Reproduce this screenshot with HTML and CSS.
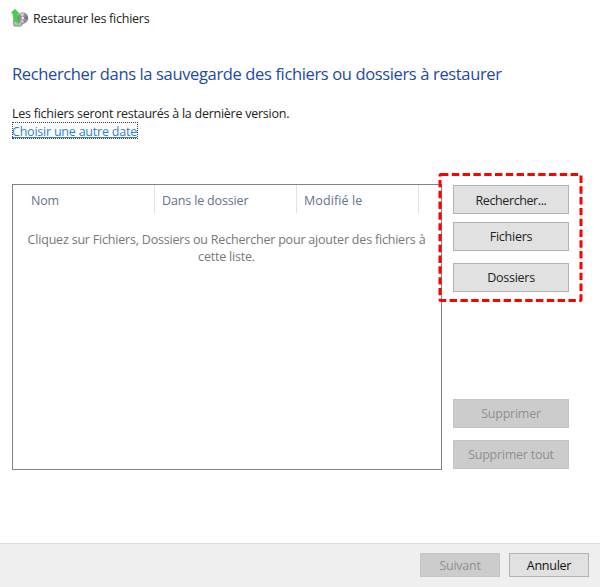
FILE: index.html
```html
<!DOCTYPE html>
<html lang="fr">
<head>
<meta charset="utf-8">
<title>Restaurer les fichiers</title>
<link rel="stylesheet" href="styles.css">
</head>
<body>
<div class="window">
  <header class="titlebar">
    <svg class="app-icon" width="18" height="18" viewBox="0 0 18 18">
      <path d="M2 12l3-3h6l3 4-5 4H3z" fill="#d5d8d5" stroke="#888" stroke-width=".6"/>
      <path d="M2 13l1.500 4h7l1-2" fill="#b9bbb9" stroke="#838583" stroke-width=".7"/>
      <ellipse cx="11.800" cy="9" rx="5" ry="5.300" fill="#958f9c" stroke="#77747c" stroke-width=".7"/>
      <path d="M11.800 9L9 4.700l4-.7z" fill="#dcd2e4"/>
      <path d="M11.800 9l4.500-2 .2 3.800z" fill="#806b7a"/>
      <path d="M11.800 9l-3 4 4 .9z" fill="#d5c9bf"/>
      <circle cx="11.800" cy="9" r="1.600" fill="#f5f5f5" stroke="#858087" stroke-width=".5"/>
      <path d="M3.800.3L.4 4l1.700.4.800 7.600 5.200 2.300-1.800-9.600 1.900-.3z" fill="#3fd548" stroke="#48a650" stroke-width=".6"/>
    </svg>
    <span class="caption">Restaurer les fichiers</span>
  </header>
  <main class="content">
    <h1 class="heading">Rechercher dans la sauvegarde des fichiers ou dossiers à restaurer</h1>
    <p class="note">Les fichiers seront restaurés à la dernière version.</p>
    <a class="link" href="#"><span class="link-text">Choisir une autre date</span></a>
    <div class="panel">
      <section class="list">
        <div class="columns">
          <span class="col col-name">Nom</span>
          <span class="col col-folder">Dans le dossier</span>
          <span class="col col-date">Modifié le</span>
        </div>
        <p class="empty">Cliquez sur Fichiers, Dossiers ou Rechercher pour ajouter des fichiers à<br>cette liste.</p>
      </section>
      <div class="actions">
        <button class="btn search">Rechercher...</button>
        <button class="btn files">Fichiers</button>
        <button class="btn folders">Dossiers</button>
        <button class="btn remove" disabled>Supprimer</button>
        <button class="btn remove-all" disabled>Supprimer tout</button>
        <svg class="highlight" width="145" height="130" viewBox="0 0 145 130">
          <rect x="2" y="2.500" width="141" height="126" fill="none" stroke="#f00" stroke-width="3" stroke-dasharray="7.400 3.400" rx="1"/>
        </svg>
      </div>
    </div>
  </main>
  <footer class="footer">
    <button class="btn next" disabled>Suivant</button>
    <button class="btn cancel">Annuler</button>
  </footer>
</div>
</body>
</html>
```
FILE: styles.css
```css
* { box-sizing: border-box; }
body { margin: 0; background: #fff; color: #222; font: 12.5px/17px "Open Sans", "Noto Sans", sans-serif; letter-spacing: -0.25px; }
.window { display: flex; flex-direction: column; width: 600px; height: 587px; }
.titlebar { display: flex; align-items: center; gap: 4px; height: 36px; padding-left: 11px; }
.app-icon { flex: none; }
.content { flex: 1; padding: 27px 0 0 12px; }
.heading { margin: 0; color: #2149a5; font-size: 16.5px; font-weight: 400; line-height: 22px; letter-spacing: -0.36px; white-space: nowrap; }
.note { margin: 20px 0 0; }
.link { display: block; width: 126px; height: 17px; color: #2e7fd5; line-height: 19px; letter-spacing: -0.22px; outline: 1px dotted #444; outline-offset: -1px; white-space: nowrap; text-underline-offset: 1px; }
.panel { display: flex; gap: 11px; margin-top: 45px; }
.list { width: 430px; height: 286px; border: 1px solid #828282; }
.columns { display: flex; height: 28px; line-height: 31px; color: #62728c; }
.col { border-right: 1px solid #e2e2e2; }
.col-name { width: 142px; padding-left: 18px; }
.col-folder { width: 142px; padding-left: 7px; letter-spacing: -0.15px; }
.col-date { width: 122px; padding-left: 7px; letter-spacing: 0.1px; }
.empty { margin: 18px 1px 0 0; color: #777; letter-spacing: -0.2px; text-align: center; white-space: nowrap; }
.actions { position: relative; display: flex; flex-direction: column; width: 116px; }
.btn { height: 29px; padding: 0; border: 1px solid #b2b2b2; background: #e1e1e1; color: #222; font: inherit; letter-spacing: inherit; }
.btn:disabled { border-color: #c4c4c4; background: #ccc; color: #909090; }
.search { margin-top: 1px; padding-top: 1px; letter-spacing: -0.4px; }
.files { margin-top: 8px; }
.folders { margin-top: 12px; }
.remove { margin-top: 107px; }
.remove-all { margin-top: 12px; }
.highlight { position: absolute; left: -15px; top: -12px; }
.footer { display: flex; justify-content: flex-end; gap: 9px; height: 44px; padding: 9px 11px 0 0; border-top: 1px solid #dedede; background: #efefef; }
.footer .btn { width: 80px; height: 24px; }
.cancel { color: #111; }
```
